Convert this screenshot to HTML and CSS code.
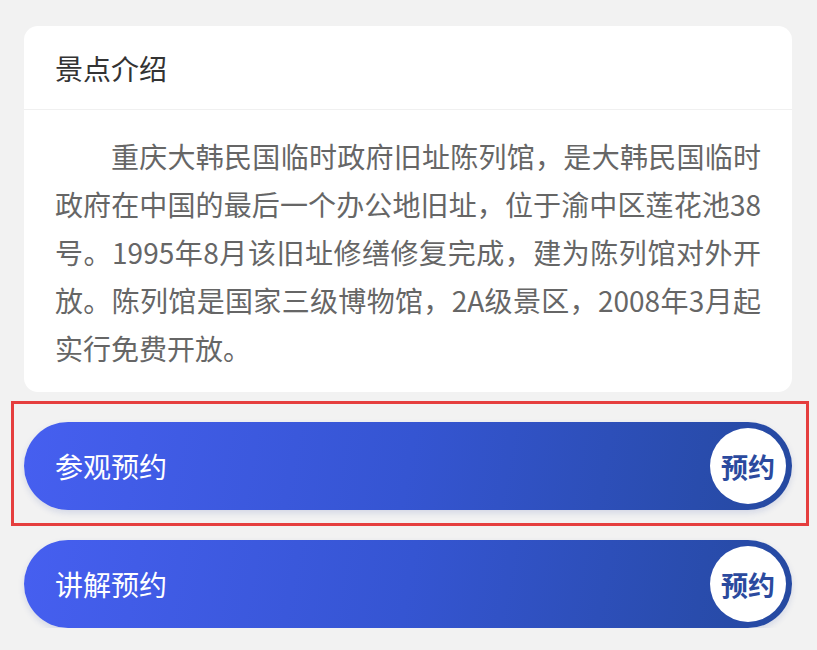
FILE: index.html
```html
<!DOCTYPE html>
<html lang="zh-CN">
<head>
    <meta charset="UTF-8">
    <meta name="viewport" content="width=device-width, initial-scale=1.0">
    <title>景点介绍</title>
    <link rel="stylesheet" href="styles.css">
</head>
<body>
    <div class="page">
        <!-- Intro card -->
        <div class="card">
            <div class="card-title">景点介绍</div>
            <p class="card-text">重庆大韩民国临时政府旧址陈列馆，是大韩民国临时政府在中国的最后一个办公地旧址，位于渝中区莲花池38号。1995年8月该旧址修缮修复完成，建为陈列馆对外开放。陈列馆是国家三级博物馆，2A级景区，2008年3月起实行免费开放。</p>
        </div>

        <!-- Booking buttons -->
        <div class="highlight">
            <a class="book-btn" href="#">
                <span class="book-label">参观预约</span>
                <span class="book-badge">预约</span>
            </a>
        </div>

        <a class="book-btn" href="#">
            <span class="book-label">讲解预约</span>
            <span class="book-badge">预约</span>
        </a>
    </div>
</body>
</html>
```

FILE: styles.css
```css
* {
    box-sizing: border-box;
}
body {
    margin: 0;
    background-color: #f2f2f2;
    font-family: "Noto Sans CJK SC", "Noto Sans", sans-serif;
}
.page {
    padding: 26px 25px 0 24px;
    display: flex;
    flex-direction: column;
}
.card {
    background: white;
    border-radius: 14px;
}
.card-title {
    height: 84px;
    display: flex;
    align-items: center;
    padding: 0 31px;
    font-size: 28px;
    color: #333;
    border-bottom: 1px solid #f0f0f0;
}
.card-text {
    margin: 0;
    padding: 22px 31px 20px;
    font-size: 28px;
    line-height: 48px;
    color: #666;
    text-indent: 2em;
    text-align: justify;
}
.highlight {
    margin: 9px -17px 14px -13px;
    padding: 18px 14px 13px 10px;
    border: 3px solid #e53e3e;
}
.book-btn {
    height: 88px;
    border-radius: 44px;
    display: flex;
    align-items: center;
    justify-content: space-between;
    padding: 0 6px 0 31px;
    background: linear-gradient(100deg, #465ff0 0%, #3555d2 50%, #2549a0 100%);
    box-shadow: 0 3px 6px rgba(40, 70, 160, 0.15);
    text-decoration: none;
}
.book-label {
    font-size: 28px;
    color: white;
}
.book-badge {
    width: 76px;
    height: 76px;
    border-radius: 50%;
    background: white;
    display: flex;
    align-items: center;
    justify-content: center;
    font-size: 27px;
    font-weight: bold;
    color: #2b4a9e;
}
```
